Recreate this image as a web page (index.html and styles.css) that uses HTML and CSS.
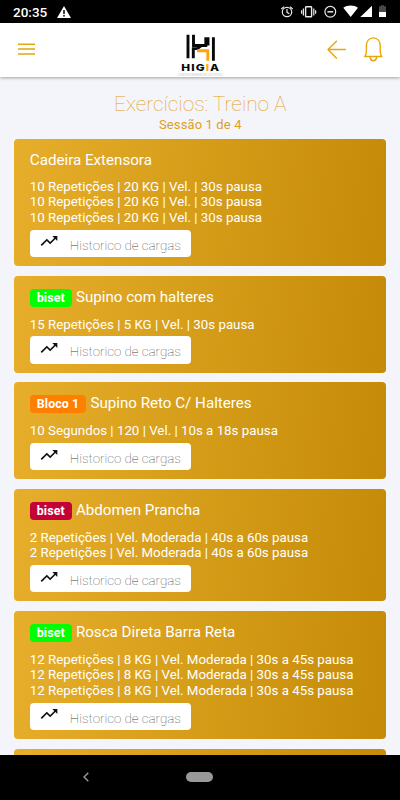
FILE: index.html
```html
<!DOCTYPE html>
<html lang="pt">
<head>
<meta charset="utf-8">
<title>Exercícios</title>
<link rel="stylesheet" href="styles.css">
</head>
<body>
<svg class="defs" width="0" height="0">
  <symbol id="trend" viewBox="0 0 24 24"><path d="M16 6l2.29 2.29-4.88 4.88-4-4L2 16.59 3.41 18l6-6 4 4 6.3-6.29L22 12V6z"/></symbol>
</svg>
<div class="status">
  <span class="clock">20:35</span>
  <svg class="warn" width="14" height="12" viewBox="0 0 14 12"><path fill="#fff" d="M7 0l7 12H0z"/><path stroke="#000" stroke-width="1.5" d="M7 4v4M7 9v1.5"/></svg>
  <svg class="sys" width="108" height="16" viewBox="280 4 108 16" fill="none" stroke="#e8e8e8" stroke-width="1.2">
    <circle cx="287" cy="12" r="4.7"/><path d="M287 9v3.3l2.3 1.5M281.3 9l2.8-2.4M292.7 9l-2.8-2.4"/>
    <rect x="305.6" y="6.8" width="6" height="10" rx=".6" stroke-width="1.4"/><path d="M303.4 8.5v7M313.8 8.5v7M301.6 10.2v3.6M315.6 10.2v3.6"/>
    <circle cx="330.3" cy="11.8" r="5.4"/><path stroke-width="1.5" d="M327.4 11.8h5.8"/>
    <path fill="#fff" stroke="none" d="M343.3 7.7c4-3 10.7-3 14.7 0l-7.3 9.3zM372 5.7V17h-11.7z"/>
    <path fill="#4b4747" stroke="none" d="M379 6.3h2V5.2h3v1.1h2V12h-7z"/><path fill="#fff" stroke="none" d="M379 12h7v5h-7z"/>
  </svg>
</div>
<header class="bar">
  <svg class="menu" width="17" height="12" viewBox="0 0 17 12"><path stroke="#e5a50f" stroke-width="1.5" d="M0 1.2h17M0 6h17M0 10.9h17"/></svg>
  <div class="logo">
    <svg width="30" height="28" viewBox="0 0 30 28" fill="none" stroke="#080808" stroke-width="2.9">
      <path d="M2 .8v23.4M7.5.8v10.7h7.5M7.3 24.2v-9.6h4l4-3.1h4.5V3.2M27.4 3.2v23.6M22 3.2v8.3"/>
      <path stroke="#ffa50a" d="M11 16.7h10.8v10.1"/>
    </svg>
    <b class="brand">HIG<i>I</i>A</b>
    <span class="tag">CINCHONHERON DE PESC</span>
  </div>
  <svg class="actions" width="56" height="26" viewBox="327 36 56 26" fill="none" stroke="#e8a60f" stroke-width="1.4" stroke-linecap="round" stroke-linejoin="round">
    <path d="M345.3 49.5h-17M336.5 41.2l-8.5 8.3 8.5 8.8"/>
    <path d="M364.7 56.5c1.6-1.6 1.7-3.6 1.7-7v-3.4c0-4.8 2.6-8.2 6.9-8.2s6.9 3.4 6.9 8.2v3.4c0 3.4.2 5.4 1.7 7zM370 57.3c.3 2.3 1.5 3.4 3.3 3.4s3-1.1 3.3-3.4"/>
  </svg>
</header>
<main>
  <h1>Exercícios: Treino A</h1>
  <p class="session">Sessão 1 de 4</p>
  <section class="card plain">
    <h2>Cadeira Extensora</h2>
    <p>10 Repetições | 20 KG | Vel. | 30s pausa</p>
    <p>10 Repetições | 20 KG | Vel. | 30s pausa</p>
    <p>10 Repetições | 20 KG | Vel. | 30s pausa</p>
    <div class="btn"><svg><use href="#trend"/></svg><span>Historico de cargas</span></div>
  </section>
  <section class="card">
    <h2><span class="badge green">biset</span>Supino com halteres</h2>
    <p>15 Repetições | 5 KG | Vel. | 30s pausa</p>
    <div class="btn"><svg><use href="#trend"/></svg><span>Historico de cargas</span></div>
  </section>
  <section class="card">
    <h2><span class="badge orange">Bloco 1</span>Supino Reto C/ Halteres</h2>
    <p>10 Segundos | 120 | Vel. | 10s a 18s pausa</p>
    <div class="btn"><svg><use href="#trend"/></svg><span>Historico de cargas</span></div>
  </section>
  <section class="card">
    <h2><span class="badge red">biset</span>Abdomen Prancha</h2>
    <p>2 Repetições | Vel. Moderada | 40s a 60s pausa</p>
    <p>2 Repetições | Vel. Moderada | 40s a 60s pausa</p>
    <div class="btn"><svg><use href="#trend"/></svg><span>Historico de cargas</span></div>
  </section>
  <section class="card">
    <h2><span class="badge green">biset</span>Rosca Direta Barra Reta</h2>
    <p>12 Repetições | 8 KG | Vel. Moderada | 30s a 45s pausa</p>
    <p>12 Repetições | 8 KG | Vel. Moderada | 30s a 45s pausa</p>
    <p>12 Repetições | 8 KG | Vel. Moderada | 30s a 45s pausa</p>
    <div class="btn"><svg><use href="#trend"/></svg><span>Historico de cargas</span></div>
  </section>
  <section class="card"></section>
</main>
<footer class="nav">
  <svg width="6" height="10" viewBox="0 0 6 10"><path fill="none" stroke="#999" stroke-width="1.4" d="M5.3.7L1 5l4.3 4.3"/></svg>
  <span class="pill"></span>
</footer>
</body>
</html>
```
FILE: styles.css
```css
* { box-sizing: border-box; }
body {
  margin: 0;
  height: 800px;
  display: flex;
  flex-direction: column;
  overflow: hidden;
  background: #f4f5fa;
  font-family: Roboto, sans-serif;
}
h1, h2, p { margin: 0; font-weight: 400; white-space: nowrap; }
.defs { display: none; }
.status {
  flex: none;
  height: 23px;
  background: #000;
  display: flex;
  align-items: center;
  padding: 0 12px 0 13px;
  color: #fff;
}
.clock { font-size: 13.5px; font-weight: 500; line-height: 16px; width: 44px; }
.warn { margin-top: 0; }
.sys { margin-left: auto; }
.bar {
  flex: none;
  height: 53.5px;
  background: #fff;
  box-shadow: 0 1px 3px rgba(0, 0, 0, .35);
  display: grid;
  grid-template-columns: 1fr 50px 1fr;
  align-items: center;
  padding: 0 17px 0 18px;
}
.menu { margin-top: -2px; }
.actions { justify-self: end; margin-top: -2px; }
.logo {
  align-self: start;
  padding-top: 10.5px;
  display: flex;
  flex-direction: column;
  align-items: center;
}
.logo svg { display: block; }
.brand {
  font: 800 9.5px/11px Inter, sans-serif;
  letter-spacing: .9px;
  transform: scaleX(1.24);
  color: #080808;
}
.brand i { font-style: normal; color: #ffa50a; }
.tag { font-size: 3.9px; line-height: 4px; margin-top: .5px; color: #d0d0d0; white-space: nowrap; }
main { flex: 1; min-height: 0; overflow: hidden; padding: 15px 13.7px 0 14.3px; }
h1 { font-size: 20.9px; font-weight: 100; line-height: 25px; text-align: center; color: #dfa01b; }
.session { font-size: 13px; line-height: 16px; text-align: center; color: #dfa01b; margin-bottom: 6.8px; letter-spacing: .12px; }
.card {
  border-radius: 4px;
  background: linear-gradient(96deg, #e6ae2a, #c58b08);
  color: #fff;
  padding: 12px 15.5px 8.9px;
  margin-bottom: 9.75px;
  min-height: 96px;
}
h2 { font-size: 15.15px; line-height: 18px; height: 28.8px; display: flex; align-items: flex-start; }
.plain h2 { height: 27.6px; }
.card p { font-size: 13.3px; line-height: 15.6px; }
.badge {
  font-size: 12.4px;
  font-weight: 700;
  line-height: 17px;
  height: 18px;
  padding: 0 7px;
  margin: 1px 4.1px 0 0;
  border-radius: 4px;
  letter-spacing: .1px;
}
.green { background: #0f0; }
.orange { background: #ff8000; }
.red { background: #c30237; }
.btn {
  width: 161px;
  height: 27.2px;
  margin-top: 4.3px;
  border-radius: 4px;
  background: #fff;
  display: flex;
  color: #444;
  font-size: 13.35px;
}
.btn svg { width: 20px; height: 20px; margin: 1.5px 10.5px 0 9.5px; fill: #111; }
.btn span { font-weight: 100; line-height: 31px; white-space: nowrap; }
.nav {
  flex: none;
  height: 45.5px;
  background: #000;
  display: grid;
  grid-template-columns: 83px 103px 27px;
  align-items: center;
}
.nav svg { grid-column: 2; }
.pill { grid-column: 3; height: 10px; border-radius: 5px; background: #999; }
```
